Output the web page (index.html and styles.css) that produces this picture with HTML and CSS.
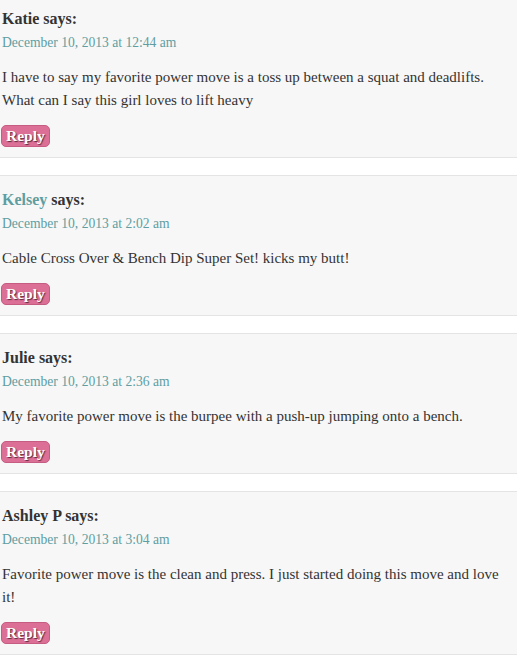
FILE: index.html
```html
<!DOCTYPE html>
<html>
<head>
<meta charset="utf-8">
<link rel="stylesheet" href="styles.css">
</head>
<body>
<ol class="comments">
  <li class="comment">
    <div class="author"><span class="name">Katie</span> <span class="says">says:</span></div>
    <div class="meta"><a href="#">December 10, 2013 at 12:44 am</a></div>
    <div class="content"><p>I have to say my favorite power move is a toss up between a squat and deadlifts. What can I say this girl loves to lift heavy</p></div>
    <div class="reply"><a class="reply-link" href="#">Reply</a></div>
  </li>
  <li class="comment">
    <div class="author"><a class="name link" href="#">Kelsey</a> <span class="says">says:</span></div>
    <div class="meta"><a href="#">December 10, 2013 at 2:02 am</a></div>
    <div class="content"><p>Cable Cross Over &amp; Bench Dip Super Set! kicks my butt!</p></div>
    <div class="reply"><a class="reply-link" href="#">Reply</a></div>
  </li>
  <li class="comment">
    <div class="author"><span class="name">Julie</span> <span class="says">says:</span></div>
    <div class="meta"><a href="#">December 10, 2013 at 2:36 am</a></div>
    <div class="content"><p>My favorite power move is the burpee with a push-up jumping onto a bench.</p></div>
    <div class="reply"><a class="reply-link" href="#">Reply</a></div>
  </li>
  <li class="comment">
    <div class="author"><span class="name">Ashley P</span> <span class="says">says:</span></div>
    <div class="meta"><a href="#">December 10, 2013 at 3:04 am</a></div>
    <div class="content"><p>Favorite power move is the clean and press. I just started doing this move and love it!</p></div>
    <div class="reply"><a class="reply-link" href="#">Reply</a></div>
  </li>
</ol>
</body>
</html>
```
FILE: styles.css
```css
html, body {
  margin: 0;
  padding: 0;
  background: #ffffff;
}
body {
  font-family: "Liberation Serif", "Times New Roman", serif;
  color: #333333;
  font-size: 15px;
}
.comments {
  list-style: none;
  margin: -6px 0 0 0;
  padding: 0;
  display: flex;
  flex-direction: column;
  gap: 17px;
}
.comment {
  background: #f7f7f7;
  border-top: 1px solid #e4e4e4;
  border-bottom: 1px solid #e4e4e4;
  padding: 13px 8px 10px 2px;
}
.author {
  font-weight: bold;
  font-size: 16px;
  line-height: 22px;
}
.name.link {
  color: #5e9ea2;
  text-decoration: none;
}
.meta {
  font-size: 13.6px;
  line-height: 22px;
  margin-top: 2px;
}
.meta a {
  color: #5e9ea2;
  text-decoration: none;
}
.content p {
  margin: 12px 0 0 0;
  font-size: 15px;
  line-height: 23px;
}
.reply {
  margin-top: 13px;
  line-height: 0;
}
.reply-link {
  display: inline-block;
  margin-left: -1px;
  background: #dc6f96;
  border: 1px solid #c75c82;
  border-radius: 5px;
  color: #ffffff;
  font-weight: bold;
  font-size: 15.5px;
  line-height: 20px;
  padding: 0 4px;
  text-decoration: none;
  text-shadow: 1px 1px 1px #5a2a3a;
}
```
